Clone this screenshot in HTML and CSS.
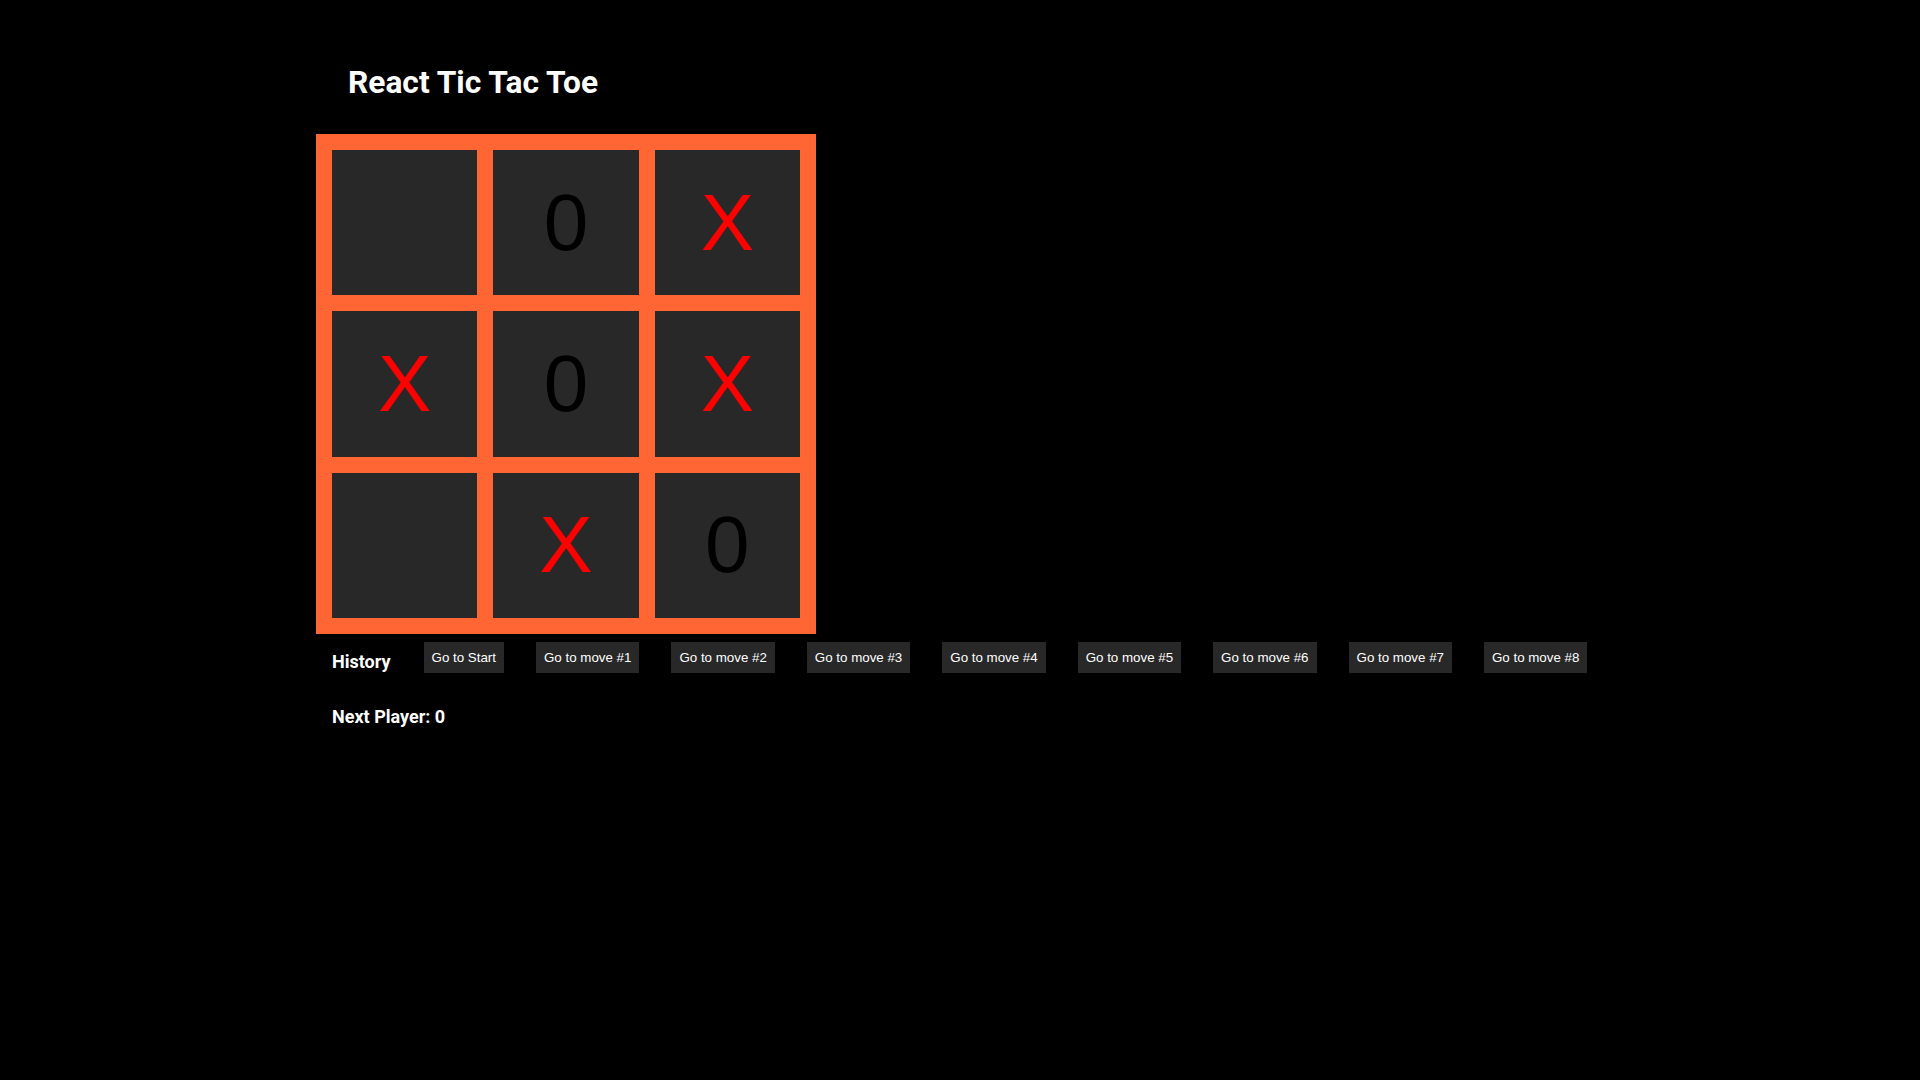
FILE: index.html
```html
<!DOCTYPE html>
<html lang="en">
<head>
<meta charset="utf-8">
<title>React Tic Tac Toe</title>
<link rel="stylesheet" href="styles.css">
</head>
<body>
<div class="game">
  <h1 class="title">React Tic Tac Toe</h1>
  <div class="board">
    <button class="cell"></button>
    <button class="cell o">0</button>
    <button class="cell x">X</button>
    <button class="cell x">X</button>
    <button class="cell o">0</button>
    <button class="cell x">X</button>
    <button class="cell"></button>
    <button class="cell x">X</button>
    <button class="cell o">0</button>
  </div>
  <div class="history">
    <h3 class="history-label">History</h3>
    <button class="move">Go to Start</button>
    <button class="move">Go to move #1</button>
    <button class="move">Go to move #2</button>
    <button class="move">Go to move #3</button>
    <button class="move">Go to move #4</button>
    <button class="move">Go to move #5</button>
    <button class="move">Go to move #6</button>
    <button class="move">Go to move #7</button>
    <button class="move">Go to move #8</button>
  </div>
  <h3 class="status">Next Player: 0</h3>
</div>
</body>
</html>
```
FILE: styles.css
```css
html, body {
  margin: 0;
  padding: 0;
  background: #000;
  min-height: 100%;
}

body {
  font-family: Roboto, "Liberation Sans", sans-serif;
  color: #fff;
}

.game {
  padding: 63px 0 0 316px;
}

.title {
  margin: 0 0 0 32px;
  font-size: 31.7px;
  font-weight: 700;
  line-height: 40px;
}

.board {
  margin-top: 31px;
  width: 500px;
  height: 500px;
  box-sizing: border-box;
  padding: 16px;
  background: #ff6633;
  display: grid;
  grid-template-columns: repeat(3, 1fr);
  grid-template-rows: repeat(3, 1fr);
  gap: 16px;
}

.cell {
  border: none;
  margin: 0;
  padding: 0;
  background: #282828;
  font-family: "Liberation Sans", Arial, sans-serif;
  font-size: 80px;
  display: flex;
  align-items: center;
  justify-content: center;
}

.cell.x { color: #ff0000; }
.cell.o { color: #000; }

.history {
  margin-top: 8px;
  padding-left: 16px;
  display: flex;
  align-items: flex-start;
  gap: 32px;
}

.history-label {
  margin: 9px 1px 0 0;
  font-size: 18px;
  font-weight: 700;
}

.move {
  border: none;
  background: #282828;
  color: #fff;
  font-family: "Liberation Sans", Arial, sans-serif;
  font-size: 13.333px;
  padding: 8px 8px;
  line-height: 15px;
  margin: 0;
}

.status {
  margin: 33px 0 0 16px;
  font-size: 18px;
  font-weight: 700;
}
```
